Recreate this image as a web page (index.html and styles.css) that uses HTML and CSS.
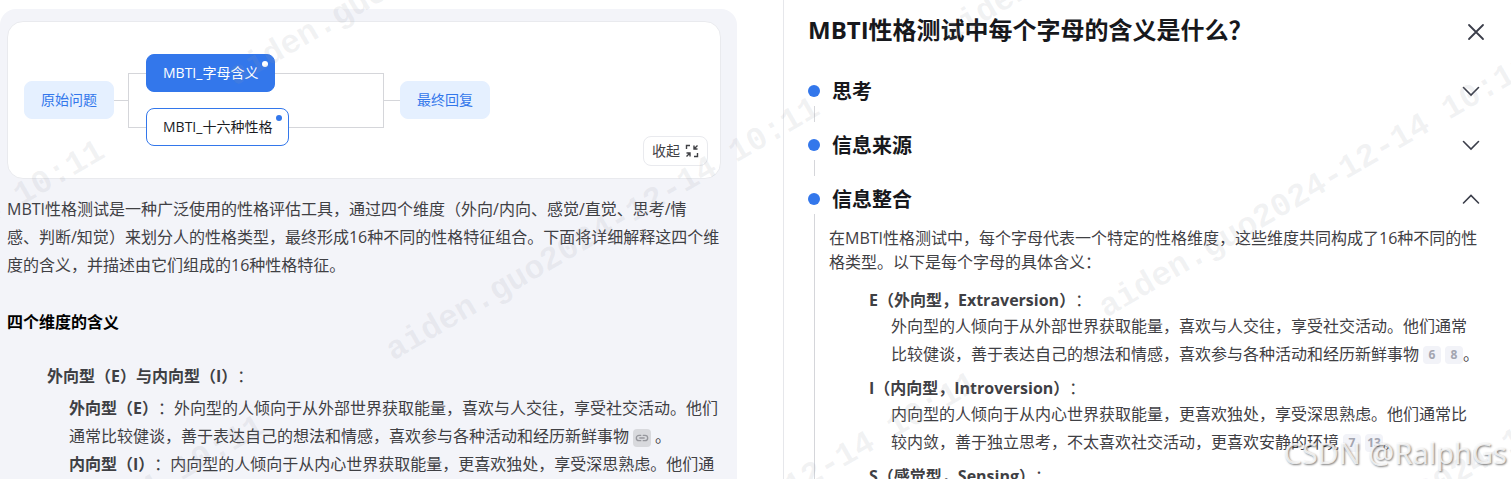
FILE: index.html
```html
<!DOCTYPE html>
<html lang="zh-CN">
<head>
  <meta charset="UTF-8" />
  <meta name="viewport" content="width=device-width, initial-scale=1" />
  <title>MBTI性格测试</title>
  <link rel="stylesheet" href="styles.css">
</head>
<body>
  <main class="layout">
    <section class="answer">
      <div class="graph-card">
        <div class="graph">
          <div class="node node-end">原始问题</div>
          <span class="line line-in"></span>
          <span class="fork"></span>
          <div class="branches">
            <div class="branch">
              <button type="button" class="node node-active">MBTI_字母含义<span class="node-dot"></span></button>
              <span class="line"></span>
            </div>
            <div class="branch">
              <button type="button" class="node">MBTI_十六种性格<span class="node-dot"></span></button>
              <span class="line"></span>
            </div>
          </div>
          <span class="join"></span>
          <span class="line line-out"></span>
          <div class="node node-end">最终回复</div>
        </div>
        <button type="button" class="collapse-btn">
          收起
          <svg width="14" height="14" viewBox="0 0 14 14" fill="none" stroke="currentColor" stroke-width="1.4">
            <path d="M1.500 5V1.500H5M9 12.500h3.500V9" />
            <path d="M12.500 1.500L9.500 4.500M9 1.500v3.500h3.500M1.500 12.500l3-3M5 12.500V9H1.500" />
          </svg>
        </button>
      </div>

      <p class="intro">MBTI性格测试是一种广泛使用的性格评估工具，通过四个维度（外向/内向、感觉/直觉、思考/情<span class="nowrap">感、判断/知觉</span>）来划分人的性格类型，最终形成16种不同的性格特征组合。下面将详细解释这四个维度的含义，并描述由它们组成的16种性格特征。</p>

      <h2 class="answer-title">四个维度的含义</h2>

      <ul class="dimension">
        <li>
          <strong>外向型（E）与内向型（I）</strong>：
          <ul class="dimension-items">
            <li><strong>外向型（E）</strong>：外向型的人倾向于从外部世界获取能量，喜欢与人交往，享受社交活动。他们通常比较健谈，善于表达自己的想法和情感，喜欢参与各种活动和经历新鲜事物<a href="#source" class="ref ref-link" aria-label="来源"><svg width="14" height="14" viewBox="0 0 14 14" fill="none" stroke="currentColor" stroke-width="1.3" stroke-linecap="round"><path d="M5.800 4.300H4a2.700 2.700 0 0 0 0 5.400h1.800M8.200 4.300H10a2.700 2.700 0 0 1 0 5.400H8.200M4.800 7h4.400" /></svg></a>。</li>
            <li><strong>内向型（I）</strong>：内向型的人倾向于从内心世界获取能量，更喜欢独处，享受深思熟虑。他们通</li>
          </ul>
        </li>
      </ul>
    </section>

    <aside class="detail">
      <header class="detail-header">
        <h1>MBTI性格测试中每个字母的含义是什么？</h1>
        <button type="button" class="close-btn" aria-label="关闭">
          <svg width="24" height="24" viewBox="0 0 24 24" fill="none" stroke="currentColor" stroke-width="1.8" stroke-linecap="round">
            <path d="M5 5l14 14M19 5L5 19" />
          </svg>
        </button>
      </header>

      <div class="step">
        <div class="step-rail"><span class="step-dot"></span><span class="step-line"></span></div>
        <h2 class="step-title">
          <button type="button" aria-expanded="false">思考
            <svg width="18" height="18" viewBox="0 0 18 18" fill="none" stroke="currentColor" stroke-width="1.6" stroke-linecap="round"><path d="M1.500 4.500L9 12l7.500-7.500" /></svg>
          </button>
        </h2>
      </div>

      <div class="step">
        <div class="step-rail"><span class="step-dot"></span><span class="step-line"></span></div>
        <h2 class="step-title">
          <button type="button" aria-expanded="false">信息来源
            <svg width="18" height="18" viewBox="0 0 18 18" fill="none" stroke="currentColor" stroke-width="1.6" stroke-linecap="round"><path d="M1.500 4.500L9 12l7.500-7.500" /></svg>
          </button>
        </h2>
      </div>

      <div class="step">
        <div class="step-rail"><span class="step-dot"></span><span class="step-line"></span></div>
        <div class="step-main">
          <h2 class="step-title">
            <button type="button" aria-expanded="true">信息整合
              <svg width="18" height="18" viewBox="0 0 18 18" fill="none" stroke="currentColor" stroke-width="1.6" stroke-linecap="round"><path d="M1.500 12L9 4.500l7.500 7.500" /></svg>
            </button>
          </h2>
          <p class="step-text">在MBTI性格测试中，每个字母代表一个特定的性格维度，这些维度共同构成了16种不同的性格类型。以下是每个字母的具体含义：</p>
          <dl class="letters">
            <dt><strong>E（外向型，Extraversion）</strong>：</dt>
            <dd>外向型的人倾向于从外部世界获取能量，喜欢与人交往，享受社交活动。他们通常比较健谈，善于表达自己的想法和情感，喜欢参与各种活动和经历新鲜事物<a href="#source-6" class="ref">6</a><a href="#source-8" class="ref">8</a>。</dd>
            <dt><strong>I（内向型，Introversion）</strong>：</dt>
            <dd>内向型的人倾向于从内心世界获取能量，更喜欢独处，享受深思熟虑。他们通常比较内敛，善于独立思考，不太喜欢社交活动，更喜欢安静的环境<a href="#source-7" class="ref">7</a><a href="#source-13" class="ref">13</a>。</dd>
            <dt><strong>S（感觉型，Sensing）</strong>：</dt>
          </dl>
        </div>
      </div>
    </aside>
  </main>

  <!-- user watermark, tiled over the whole page -->
  <svg class="watermark" aria-hidden="true">
    <text transform="translate(-322 404) rotate(-30)">aiden.guo2024-12-14 10:11</text>
    <text transform="translate(235 86) rotate(-30)">aiden.guo2024-12-14 10:11</text>
    <text transform="translate(-162 679) rotate(-30)">aiden.guo2024-12-14 10:11</text>
    <text transform="translate(393 361) rotate(-30)">aiden.guo2024-12-14 10:11</text>
    <text transform="translate(948 43) rotate(-30)">aiden.guo2024-12-14 10:11</text>
    <text transform="translate(551 636) rotate(-30)">aiden.guo2024-12-14 10:11</text>
    <text transform="translate(1106 318) rotate(-30)">aiden.guo2024-12-14 10:11</text>
    <text transform="translate(1269 593) rotate(-30)">aiden.guo2024-12-14 10:11</text>
  </svg>
  <div class="credit">CSDN @RalphGs</div>
</body>
</html>
```
FILE: styles.css
```css
* {
  box-sizing: border-box;
}
body {
  margin: 0;
  height: 100vh;
  overflow: hidden;
  position: relative;
  font-family: "Open Sans", "Noto Sans CJK SC", sans-serif;
  font-size: 16px;
  line-height: 28px;
  text-spacing-trim: space-all; /* keep full-width punctuation full width */
  color: #3f4044;
  background: #fff;
}
h1, h2, p, ul, dl, dd {
  margin: 0;
  padding: 0;
}
ul {
  list-style: none;
}
button {
  font: inherit;
  color: inherit;
  cursor: pointer;
}
svg {
  display: block;
  flex: none;
}
.nowrap {
  white-space: nowrap;
}
.layout {
  display: grid;
  grid-template-columns: minmax(0, 737fr) minmax(0, 728fr);
  gap: 46px;
  height: 100%;
}

/* left: answer */
.answer {
  margin-top: 9px;
  padding: 12px 16px 0 7px;
  background: #f3f4f9;
  border-radius: 16px 16px 0 0;
  overflow: hidden;
}
.graph-card {
  display: flex;
  justify-content: space-between;
  align-items: flex-end;
  min-height: 158px;
  padding: 32px 12px 12px 16px;
  background: #fff;
  border: 1px solid #e9eaee;
  border-radius: 16px;
}
.graph {
  display: flex;
  align-items: center;
  align-self: flex-start;
  font-size: 14px;
  line-height: 20px;
}
.node {
  position: relative;
  height: 38px;
  padding: 0 16px;
  display: flex;
  align-items: center;
  color: #1a1b1f;
  background: #fff;
  border: 1px solid #3377eb;
  border-radius: 8px;
  white-space: nowrap;
}
.node-active {
  color: #fff;
  background: #3377eb;
}
.node-end {
  color: #3377eb;
  background: #e5f0ff;
  border-color: #e5f0ff;
}
.node-dot {
  position: absolute;
  top: 6px;
  right: 6px;
  width: 6px;
  height: 6px;
  border-radius: 50%;
  background: #3377eb;
}
.node-active .node-dot {
  background: #fff;
}
.line {
  flex: 1;
  height: 1px;
  background: #d5d6da;
}
.line-in {
  flex: 0 0 14px;
}
.line-out {
  flex: 0 0 16px;
}
.fork {
  width: 18px;
  height: 55px;
  border: 1px solid #d5d6da;
  border-right: 0;
}
.branches {
  width: 237px;
  display: flex;
  flex-direction: column;
  gap: 16px;
}
.branch {
  display: flex;
  align-items: center;
}
.join {
  width: 1px;
  height: 55px;
  background: #d5d6da;
}
.collapse-btn {
  display: flex;
  align-items: center;
  gap: 5px;
  height: 30px;
  padding: 0 8px;
  font-size: 14px;
  line-height: 20px;
  background: #fff;
  border: 1px solid #e9eaee;
  border-radius: 8px;
}
.intro {
  margin-top: 16px;
}
.answer-title {
  margin-top: 29px;
  font-size: 16px;
  color: #000;
}
.dimension {
  margin-top: 26px;
  padding-left: 40px;
}
.dimension-items {
  margin-top: 4px;
  padding-left: 22px;
}
.ref {
  display: inline-block;
  width: 18px;
  height: 18px;
  margin: 0 0 0 4px;
  font-size: 12px;
  font-weight: 700;
  line-height: 18px;
  text-align: center;
  text-decoration: none;
  vertical-align: 1px;
  color: #a3a5b0;
  background: #f2f3f8;
  border-radius: 4px;
}
.ref-link {
  display: inline-flex;
  align-items: center;
  justify-content: center;
  margin-right: 4px;
  vertical-align: -3px;
  color: #96979d;
  background: #d8d9dd;
}

/* right: step detail */
.detail {
  padding: 14px 31px 0 24px;
  border-left: 1px solid #e6e7eb;
  overflow: hidden;
}
.detail-header {
  display: flex;
  justify-content: space-between;
  align-items: flex-end;
  margin: 0 -8px 30px 0;
  color: #3b3e4a;
}
.detail-header h1 {
  font-size: 24px;
  line-height: 32px;
  color: #17181c;
}
.close-btn {
  height: 28px;
  padding: 0;
  border: 0;
  background: none;
}
.step {
  display: flex;
  gap: 12px;
  min-height: 54px;
}
.step-rail {
  flex: 0 0 12px;
  display: flex;
  flex-direction: column;
  align-items: center;
  gap: 9px;
  padding: 9px 0 8px;
}
.step-dot {
  width: 12px;
  height: 12px;
  border-radius: 50%;
  background: #3377eb;
}
.step-line {
  flex: 1;
  width: 1px;
  background: #d5d6da;
}
.step-title {
  flex: 1;
  font-size: 20px;
  line-height: 32px;
  color: #17181c;
}
.step-title button {
  display: flex;
  justify-content: space-between;
  align-items: center;
  width: 100%;
  padding: 0;
  text-align: left;
  border: 0;
  background: none;
}
.step-title svg {
  color: #3b3e4a;
}
.step-main {
  flex: 1;
  min-width: 0;
}
.step-text {
  margin: 10px 0 12px -3px;
  line-height: 24px;
}
.letters {
  padding-left: 37px;
}
.letters dt {
  line-height: 28px;
}
.letters dd {
  margin: -2px 0 6px;
  padding-left: 22px;
}

/* overlays */
.watermark {
  position: absolute;
  inset: 0;
  width: 100%;
  height: 100%;
  pointer-events: none;
  font-family: "Liberation Mono", monospace;
  font-size: 33px;
  font-weight: 700;
  fill: rgba(150, 155, 165, 0.13);
}
.credit {
  position: absolute;
  right: 4px;
  bottom: 12px;
  font-family: "Noto Sans", sans-serif;
  font-size: 29px;
  color: rgba(255, 255, 255, 0.8);
  text-shadow: 1px 1px 2px rgba(0, 0, 0, 0.5);
  pointer-events: none;
}
```
